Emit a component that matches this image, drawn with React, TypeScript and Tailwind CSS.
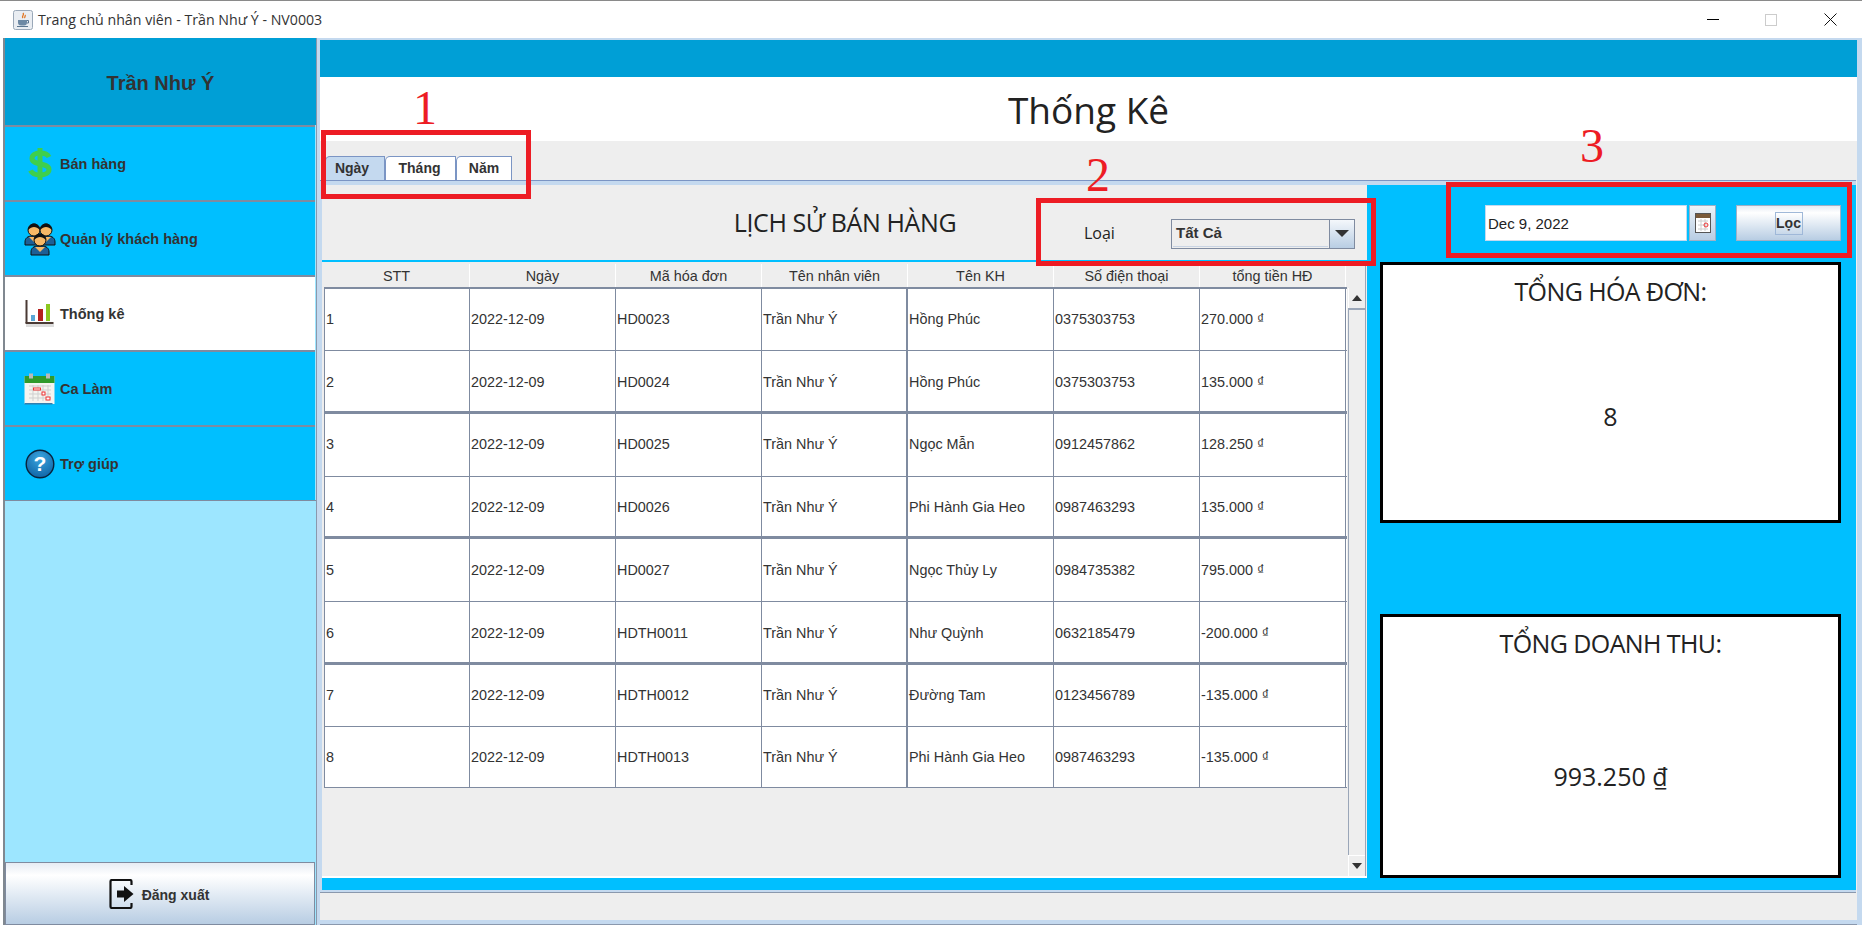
import React from "react";

const rows = [
  ["1", "2022-12-09", "HD0023", "Trần Như Ý", "Hồng Phúc", "0375303753", "270.000 ₫"],
  ["2", "2022-12-09", "HD0024", "Trần Như Ý", "Hồng Phúc", "0375303753", "135.000 ₫"],
  ["3", "2022-12-09", "HD0025", "Trần Như Ý", "Ngọc Mẫn", "0912457862", "128.250 ₫"],
  ["4", "2022-12-09", "HD0026", "Trần Như Ý", "Phi Hành Gia Heo", "0987463293", "135.000 ₫"],
  ["5", "2022-12-09", "HD0027", "Trần Như Ý", "Ngọc Thủy Ly", "0984735382", "795.000 ₫"],
  ["6", "2022-12-09", "HDTH0011", "Trần Như Ý", "Như Quỳnh", "0632185479", "-200.000 ₫"],
  ["7", "2022-12-09", "HDTH0012", "Trần Như Ý", "Đường Tam", "0123456789", "-135.000 ₫"],
  ["8", "2022-12-09", "HDTH0013", "Trần Như Ý", "Phi Hành Gia Heo", "0987463293", "-135.000 ₫"],
];
const rowClass = [
  "h-[62px] border-b",
  "h-[63px] border-b-[3px]",
  "h-[63px] border-b",
  "h-[62px] border-b-[3px]",
  "h-[63px] border-b",
  "h-[63px] border-b-[3px]",
  "h-[62px] border-b",
  "h-[61px] border-b",
];
const cellPad = ["pt-0", "pt-[3px]", "pt-0", "pt-[2px]", "pt-[2px]", "pt-[3px]", "pt-0", "pt-[2px]"];
const headers = ["STT", "Ngày", "Mã hóa đơn", "Tên nhân viên", "Tên KH", "Số điện thoại", "tổng tiền HĐ"];

const DollarIcon = () => (
  <svg width="30" height="34" viewBox="0 0 30 34">
    <path d="M15 1v32" stroke="#3ecf4c" strokeWidth="5" />
    <path d="M24 10c-1.5-3-5-4-9-4-5 0-8 2.5-8 5.5 0 7 17 4 17 11 0 3.500-4 5.500-9 5.500-4 0-8-1.500-9.500-4.500" fill="none" stroke="#3ecf4c" strokeWidth="5" />
  </svg>
);
const Person = ({ x, y }: { x: number; y: number }) => (
  <g transform={`translate(${x} ${y})`}>
    <path d="M0 19c0-4 3-6 7-6h4c4 0 7 2 7 6v3H0z" fill="#1d5f96" stroke="#111" strokeWidth="1" />
    <path d="M4 14l5 5 5-5z" fill="#f7b866" />
    <circle cx="9" cy="7" r="6" fill="#f7b866" stroke="#111" strokeWidth="1" />
    <path d="M3 7c0-4 3-6.500 6-6.500S15 3 15 7c-2-2-4-3-6-3S5 5 3 7z" fill="#111" />
  </g>
);
const UsersIcon = () => (
  <svg width="32" height="34" viewBox="0 0 30 34">
    <Person x={0} y={1} />
    <Person x={12} y={1} />
    <Person x={6} y={11} />
  </svg>
);
const ChartIcon = () => (
  <svg width="30" height="30" viewBox="0 0 30 30">
    <rect x="0.500" y="1" width="2" height="23" fill="#4a3a35" />
    <rect x="0.500" y="23" width="28" height="2" fill="#4a3a35" />
    <rect x="1" y="25" width="28" height="3" fill="#dddddd" />
    <rect x="6" y="16" width="4" height="6" fill="#5aa6d6" />
    <rect x="13" y="10" width="5" height="12" fill="#b5211f" />
    <rect x="21" y="5" width="4" height="17" fill="#8cc820" />
  </svg>
);
const CalendarIcon = () => (
  <svg width="31" height="32" viewBox="0 0 31 32">
    <rect x="0.500" y="3" width="30" height="28" fill="#f4f4f0" />
    <rect x="0.500" y="3" width="30" height="7" fill="#2f9a2c" />
    <rect x="5" y="0.500" width="4" height="5" fill="#b9b9b9" />
    <rect x="22" y="0.500" width="4" height="5" fill="#b9b9b9" />
    <rect x="0.500" y="30" width="28" height="1.500" fill="#2f7fb0" />
    <path d="M5 13h22M5 17h22M5 21h22M5 25h22M9 12v16M14 12v16M19 12v16M24 12v16" stroke="#cfcfcf" strokeWidth="1" />
    <rect x="9.500" y="15" width="7" height="2" fill="#fff" stroke="#e33" />
    <rect x="18" y="19" width="3" height="3" fill="#fff" stroke="#e33" />
    <rect x="22" y="24" width="4" height="3" fill="#fff" stroke="#e33" />
  </svg>
);
const HelpIcon = () => (
  <svg width="30" height="30" viewBox="0 0 30 30">
    <defs>
      <radialGradient id="h" cx="0.500" cy="0.300" r="0.800">
        <stop offset="0" stopColor="#3ba6e0" />
        <stop offset="1" stopColor="#0a5c9e" />
      </radialGradient>
    </defs>
    <circle cx="15" cy="15" r="13.800" fill="url(#h)" stroke="#08233c" strokeWidth="1.400" />
    <text x="15" y="22" textAnchor="middle" fontSize="21" fontWeight="700" fontFamily="Liberation Sans" fill="#fff">?</text>
  </svg>
);
const LogoutIcon = () => (
  <svg width="25" height="30" viewBox="0 0 25 30">
    <path d="M22.500 6V2.500a1.500 1.500 0 0 0-1.500-1.500H3A1.500 1.500 0 0 0 1.500 2.500v25A1.500 1.500 0 0 0 3 29h18a1.500 1.500 0 0 0 1.500-1.500V24" fill="none" stroke="#111" strokeWidth="2.200" />
    <path d="M8 11.500h7V7l9.500 8-9.500 8v-4.500H8z" fill="#111" />
  </svg>
);
const JavaIcon = () => (
  <svg width="20" height="20" viewBox="0 0 20 20" className="shrink-0">
    <rect x="0.500" y="0.500" width="19" height="19" rx="2" fill="#e9edf2" stroke="#9aa8b8" />
    <path d="M10 3c2 2-2 3 0 5M12 5c1 1-1 2 0 3" stroke="#e0701a" strokeWidth="1.300" fill="none" />
    <path d="M5 10h9v2.500a3 3 0 0 1-3 3H8a3 3 0 0 1-3-3z" fill="#6d89a4" />
    <path d="M14 10.500h1.500v2.500H14M4 16.500h11" stroke="#5b7690" strokeWidth="1" fill="none" />
  </svg>
);
const SmallCal = () => (
  <svg width="16" height="20" viewBox="0 0 16 20">
    <rect x="0.500" y="0.500" width="15" height="19" fill="#fff" stroke="#555" />
    <rect x="1" y="1" width="14" height="4" fill="#7a5a3a" />
    <path d="M3 8h10M3 12h10M3 16h10M6 6v12M10 6v12" stroke="#ccc" />
    <circle cx="11" cy="12" r="2" fill="none" stroke="#e33" />
  </svg>
);

const menu = [
  { label: "Bán hàng", icon: <DollarIcon />, active: false },
  { label: "Quản lý khách hàng", icon: <UsersIcon />, active: false },
  { label: "Thống kê", icon: <ChartIcon />, active: true },
  { label: "Ca Làm", icon: <CalendarIcon />, active: false },
  { label: "Trợ giúp", icon: <HelpIcon />, active: false },
];

const Sidebar = () => (
  <aside className="w-[313px] h-[887px] flex flex-col border-l-2 border-[#808890] bg-[#9de6ff] font-['Liberation_Sans',sans-serif]">
    <div className="h-[87px] shrink-0 bg-[#009fd6] flex items-center justify-center text-[20px] font-bold text-[#333] pt-[2px]">Trần Như Ý</div>
    {menu.map((m) => (
      <div
        key={m.label}
        className={`h-[75px] shrink-0 flex items-center gap-[4px] pl-[18px] border-t-[2px] border-[#7f8ba0] mr-[1px] text-[14.500px] font-bold text-[#333] ${m.active ? "bg-white" : "bg-[#00bfff]"}`}
      >
        <span className="w-[33px] flex justify-center">{m.icon}</span>
        <span className="pt-[2px]">{m.label}</span>
      </div>
    ))}
    <div className="h-[1px] bg-[#7f8ba0] shrink-0" />
    <div className="flex-1" />
    <div className="h-[63px] shrink-0 mr-[1px] border border-[#7f8ba0] bg-gradient-to-b from-[#e6ecf4] via-[#ffffff] via-[20%] to-[#b8cde3] flex items-center justify-center gap-[8px] text-[14px] font-bold text-[#333] pr-[2px]">
      <LogoutIcon />
      <span className="pt-[3px]">Đăng xuất</span>
    </div>
  </aside>
);

const Tab = ({ label, active, w, pad }: { label: string; active?: boolean; w: string; pad: string }) => (
  <div className={`${w} ${pad} h-[24px] border-t border-r border-l border-[#7b95c4] rounded-tl-[5px] flex items-center justify-center text-[14px] font-bold text-[#333] ${active ? "bg-[#c4d9ef]" : "bg-white"}`}>
    {label}
  </div>
);

const Table = () => (
  <div className="flex-1 flex text-[14.400px] text-[#333]">
    <div className="w-[1023px] shrink-0 ml-[2px] pt-[2px]">
      <div className="flex h-[25px] border-b-2 border-[#7f8ba0]">
        {headers.map((h) => (
          <div key={h} className="w-[146px] flex items-center justify-center bg-[#eeeeee] border-r border-white pt-[2px]">{h}</div>
        ))}
      </div>
      {rows.map((r, i) => (
        <div key={r[0]} className={`flex bg-white border-[#7f8ba0] ${rowClass[i]}`}>
          {r.map((c, j) => (
            <div key={j} className={`w-[146px] flex items-center pl-[1px] border-r border-[#7f8ba0] ${cellPad[i]} ${j === 0 ? "border-l" : ""} ${j === 3 ? "border-r-2" : ""}`}>{c}</div>
          ))}
        </div>
      ))}
    </div>
    <div className="w-[18px] ml-[1px] flex flex-col border-r border-[#9aa6b8]">
      <div className="h-[26px]" />
      <div className="h-[20px] border-l border-white flex items-center justify-center bg-[#eeeeee]">
        <div className="w-0 h-0 border-l-[5px] border-r-[5px] border-b-[6px] border-l-transparent border-r-transparent border-b-[#333]" />
      </div>
      <div className="flex-1 border-l border-[#9aa6b8] border-t-2 border-t-[#9aa6b8] bg-[#eeeeee]" />
      <div className="h-[21px] border-l border-t border-white flex items-center justify-center bg-[#eeeeee]">
        <div className="w-0 h-0 border-l-[5px] border-r-[5px] border-t-[6px] border-l-transparent border-r-transparent border-t-[#333]" />
      </div>
    </div>
  </div>
);

const StatBox = ({ title, value, h, gap, mt }: { title: string; value: string; h: string; gap: string; mt: string }) => (
  <div className={`${h} ${mt} w-[461px] border-[3px] border-black bg-white flex flex-col items-center text-[25px] text-[#222] font-['Open_Sans',sans-serif]`}>
    <div className="mt-[8px] tracking-[-0.6px]">{title}</div>
    <div className={gap}>{value}</div>
  </div>
);

const Overlay = () => (
  <>
    <div className="absolute left-[321px] top-[130px] w-[210px] h-[69px] border-[5px] border-[#ed1c24]" />
    <div className="absolute left-[1036px] top-[198px] w-[340px] h-[68px] border-[5px] border-[#ed1c24]" />
    <div className="absolute left-[1446px] top-[182px] w-[406px] h-[76px] border-[5px] border-[#ed1c24]" />
    <div className="absolute left-[405px] top-[81px] w-[40px] text-center text-[48px] leading-[54px] text-[#ed1c24] font-['Liberation_Serif',serif]">1</div>
    <div className="absolute left-[1078px] top-[148px] w-[40px] text-center text-[48px] leading-[54px] text-[#ed1c24] font-['Liberation_Serif',serif]">2</div>
    <div className="absolute left-[1572px] top-[119px] w-[40px] text-center text-[48px] leading-[54px] text-[#ed1c24] font-['Liberation_Serif',serif]">3</div>
  </>
);

export default function App() {
  return (
    <div className="relative w-[1862px] h-[925px] bg-white overflow-hidden flex flex-col font-['Liberation_Sans',sans-serif]">
      <div className="h-[38px] shrink-0 flex items-center pl-[13px] border-t border-[#8a8a8a] text-[14.200px] text-[#333] font-['Open_Sans',sans-serif]">
        <JavaIcon />
        <span className="ml-[5px]">Trang chủ nhân viên - Trần Như Ý - NV0003</span>
        <div className="ml-auto flex items-center">
          <div className="w-[12px] h-[1px] bg-black mr-[46px]" />
          <div className="w-[12px] h-[12px] border border-[#ccc] mr-[47px]" />
          <svg width="13" height="13" viewBox="0 0 13 13" className="mr-[25px]">
            <path d="M0.500 0.500l12 12M12.500 0.500l-12 12" stroke="#111" strokeWidth="1" />
          </svg>
        </div>
      </div>
      <div className="flex-1 flex pl-[3px]">
        <Sidebar />
        <main className="w-[1546px] h-[887px] border-l border-[#8a98ad] bg-[#c4d9ef] pl-[3px] pr-[5px] pt-[2px] flex flex-col">
          <div className="h-[37px] shrink-0 bg-[#009fd6]" />
          <div className="h-[64px] shrink-0 bg-white flex items-center justify-center text-[37px] text-[#222] font-['Open_Sans',sans-serif] pt-[2px]">Thống Kê</div>
          <div className="flex-1 bg-[#eeeeee] flex flex-col">
            <div className="h-[39px] shrink-0 pt-[15px] pl-[5px] flex">
              <Tab label="Ngày" active w="w-[60px]" pad="pr-[6px]" />
              <Tab label="Tháng" w="w-[71px]" pad="pr-[2px]" />
              <Tab label="Năm" w="w-[56px]" pad="pr-0" />
            </div>
            <div className="h-[713px] shrink-0 border-t border-[#7b95c4] bg-[#c4d9ef] pt-[4px] pl-[2px] pb-[2px] border-b border-b-[#8a98ad] mr-[1px]">
              <div className="h-[705px] bg-[#00bfff] flex pr-[3px]">
                <section className="w-[1045px] h-[693px] shrink-0 bg-[#eeeeee] flex flex-col border-b-2 border-white">
                  <div className="h-[75px] shrink-0 flex items-center">
                    <div className="w-[360px] ml-[343px] text-center text-[25px] text-[#222] font-['Open_Sans',sans-serif] tracking-[-0.4px] pt-[1px]">LỊCH SỬ BÁN HÀNG</div>
                    <div className="ml-[59px] w-[87px] text-[16px] text-[#222] font-['Open_Sans',sans-serif] pt-[20px]">Loại</div>
                    <div className="w-[184px] h-[30px] mt-[22px] flex border border-[#7f8ba0] bg-[#eeeeee]">
                      <div className="flex-1 m-[1px] flex items-center pl-[3px] text-[15px] font-bold text-[#333] border-b border-[#c9d4e3]">Tất Cả</div>
                      <div className="w-[25px] border-l border-[#7f8ba0] bg-gradient-to-b from-[#f4f7fb] to-[#b8cde3] flex items-center justify-center">
                        <div className="w-0 h-0 border-l-[7px] border-r-[7px] border-t-[7px] border-l-transparent border-r-transparent border-t-[#333]" />
                      </div>
                    </div>
                  </div>
                  <div className="h-[2px] shrink-0 bg-[#00bfff]" />
                  <Table />
                </section>
                <section className="flex-1 pt-[20px]">
                  <div className="flex h-[36px] ml-[118px]">
                    <div className="w-[202px] bg-white border border-[#c4d9ef] flex items-center pl-[2px] pt-[3px] text-[15px] text-[#222]">Dec 9, 2022</div>
                    <div className="w-[27px] ml-[2px] bg-gradient-to-b from-[#eef3f8] to-[#b8cde3] border border-[#9fb0c6] flex items-center justify-center">
                      <SmallCal />
                    </div>
                    <div className="w-[105px] ml-[20px] bg-gradient-to-b from-[#e6ecf4] via-white via-[20%] to-[#b8cde3] border border-[#9fb0c6] flex items-center justify-center">
                      <span className="w-[28px] h-[23px] border border-[#9fb8d8] flex items-center justify-center text-[14px] font-bold text-[#333]">Lọc</span>
                    </div>
                  </div>
                  <div className="ml-[13px] flex flex-col">
                    <StatBox title="TỔNG HÓA ĐƠN:" value="8" h="h-[261px]" mt="mt-[21px]" gap="mt-[87px]" />
                    <StatBox title="TỔNG DOANH THU:" value="993.250 ₫" h="h-[264px]" mt="mt-[91px]" gap="mt-[95px]" />
                  </div>
                </section>
              </div>
            </div>
          </div>
          <div className="h-[4px] shrink-0" />
          <div className="h-[1px] shrink-0 bg-[#8a98ad]" />
        </main>
      </div>
      <Overlay />
    </div>
  );
}
